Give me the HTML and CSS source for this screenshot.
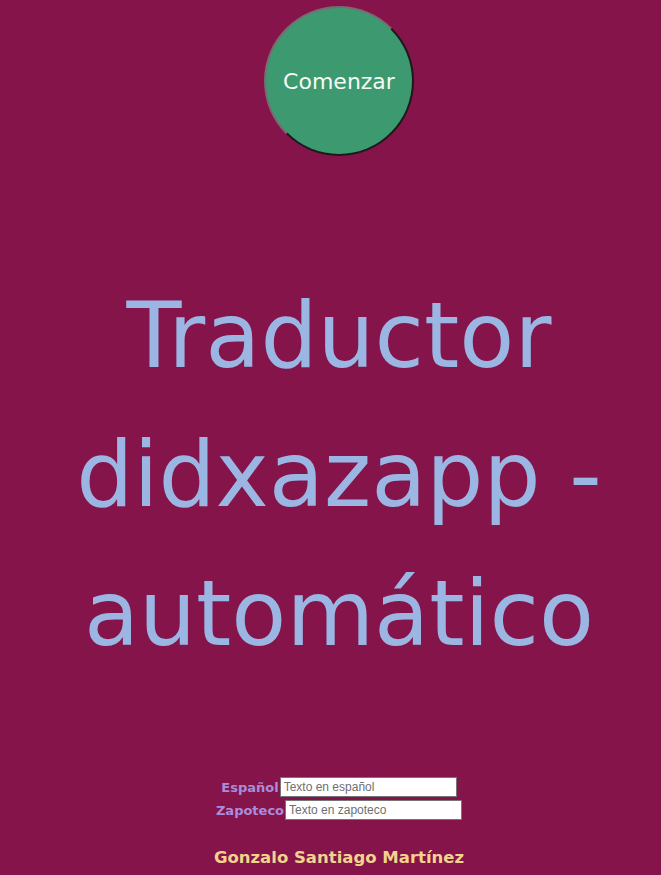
FILE: index.html
```html
<!DOCTYPE html>
<html lang="es">
<head>
<meta charset="utf-8">
<title>Traductor didxazapp</title>
<link rel="stylesheet" href="styles.css">
</head>
<body>
<div class="top">
  <button class="start">Comenzar</button>
</div>
<h1 class="title">Traductor didxazapp - automático</h1>
<form class="form">
  <div class="row"><label class="lbl" for="es">Español</label><input id="es" class="field" type="text" placeholder="Texto en español"></div>
  <div class="row"><label class="lbl" for="za">Zapoteco</label><input id="za" class="field" type="text" placeholder="Texto en zapoteco"></div>
</form>
<p class="author">Gonzalo Santiago Martínez</p>
</body>
</html>
```
FILE: styles.css
```css
html, body {
  margin: 0;
  background: #85144b;
}
body {
  padding-left: 17px;
  font-family: "DejaVu Sans", sans-serif;
  height: 875px;
  box-sizing: border-box;
  overflow: hidden;
}
.top {
  display: flex;
  justify-content: center;
  padding-top: 6px;
}
.start {
  width: 150px;
  height: 150px;
  border-radius: 50%;
  background: #3d9970;
  color: #f4fbf4;
  font-family: "DejaVu Sans", sans-serif;
  font-size: 22px;
  border: 2px solid;
  border-color: #7a6a72 #1e1a1c #1e1a1c #7a6a72;
  padding: 0;
  box-sizing: border-box;
}
.title {
  margin: 110px 0 0;
  text-align: center;
  font-weight: normal;
  font-size: 90px;
  line-height: 139px;
  color: #9bb6e3;
}
.form {
  margin-top: 94px;
  display: flex;
  flex-direction: column;
  align-items: center;
  gap: 3px;
}
.row {
  display: flex;
  align-items: center;
  height: 20px;
}
.lbl {
  color: #a98ddb;
  font-weight: bold;
  font-size: 13px;
  margin-right: 1px;
}
.field {
  width: 177px;
  height: 20px;
  box-sizing: border-box;
  border: 1px solid #767676;
  background: #fff;
  font-family: "Liberation Sans", Arial, sans-serif;
  font-size: 12px;
  padding: 0 3px;
  margin: 0;
}
.field::placeholder {
  color: #6f6f6f;
}
.author {
  margin: 28px 0 0;
  text-align: center;
  color: #f2d38c;
  font-weight: bold;
  font-size: 16.5px;
  line-height: 20px;
}
```
